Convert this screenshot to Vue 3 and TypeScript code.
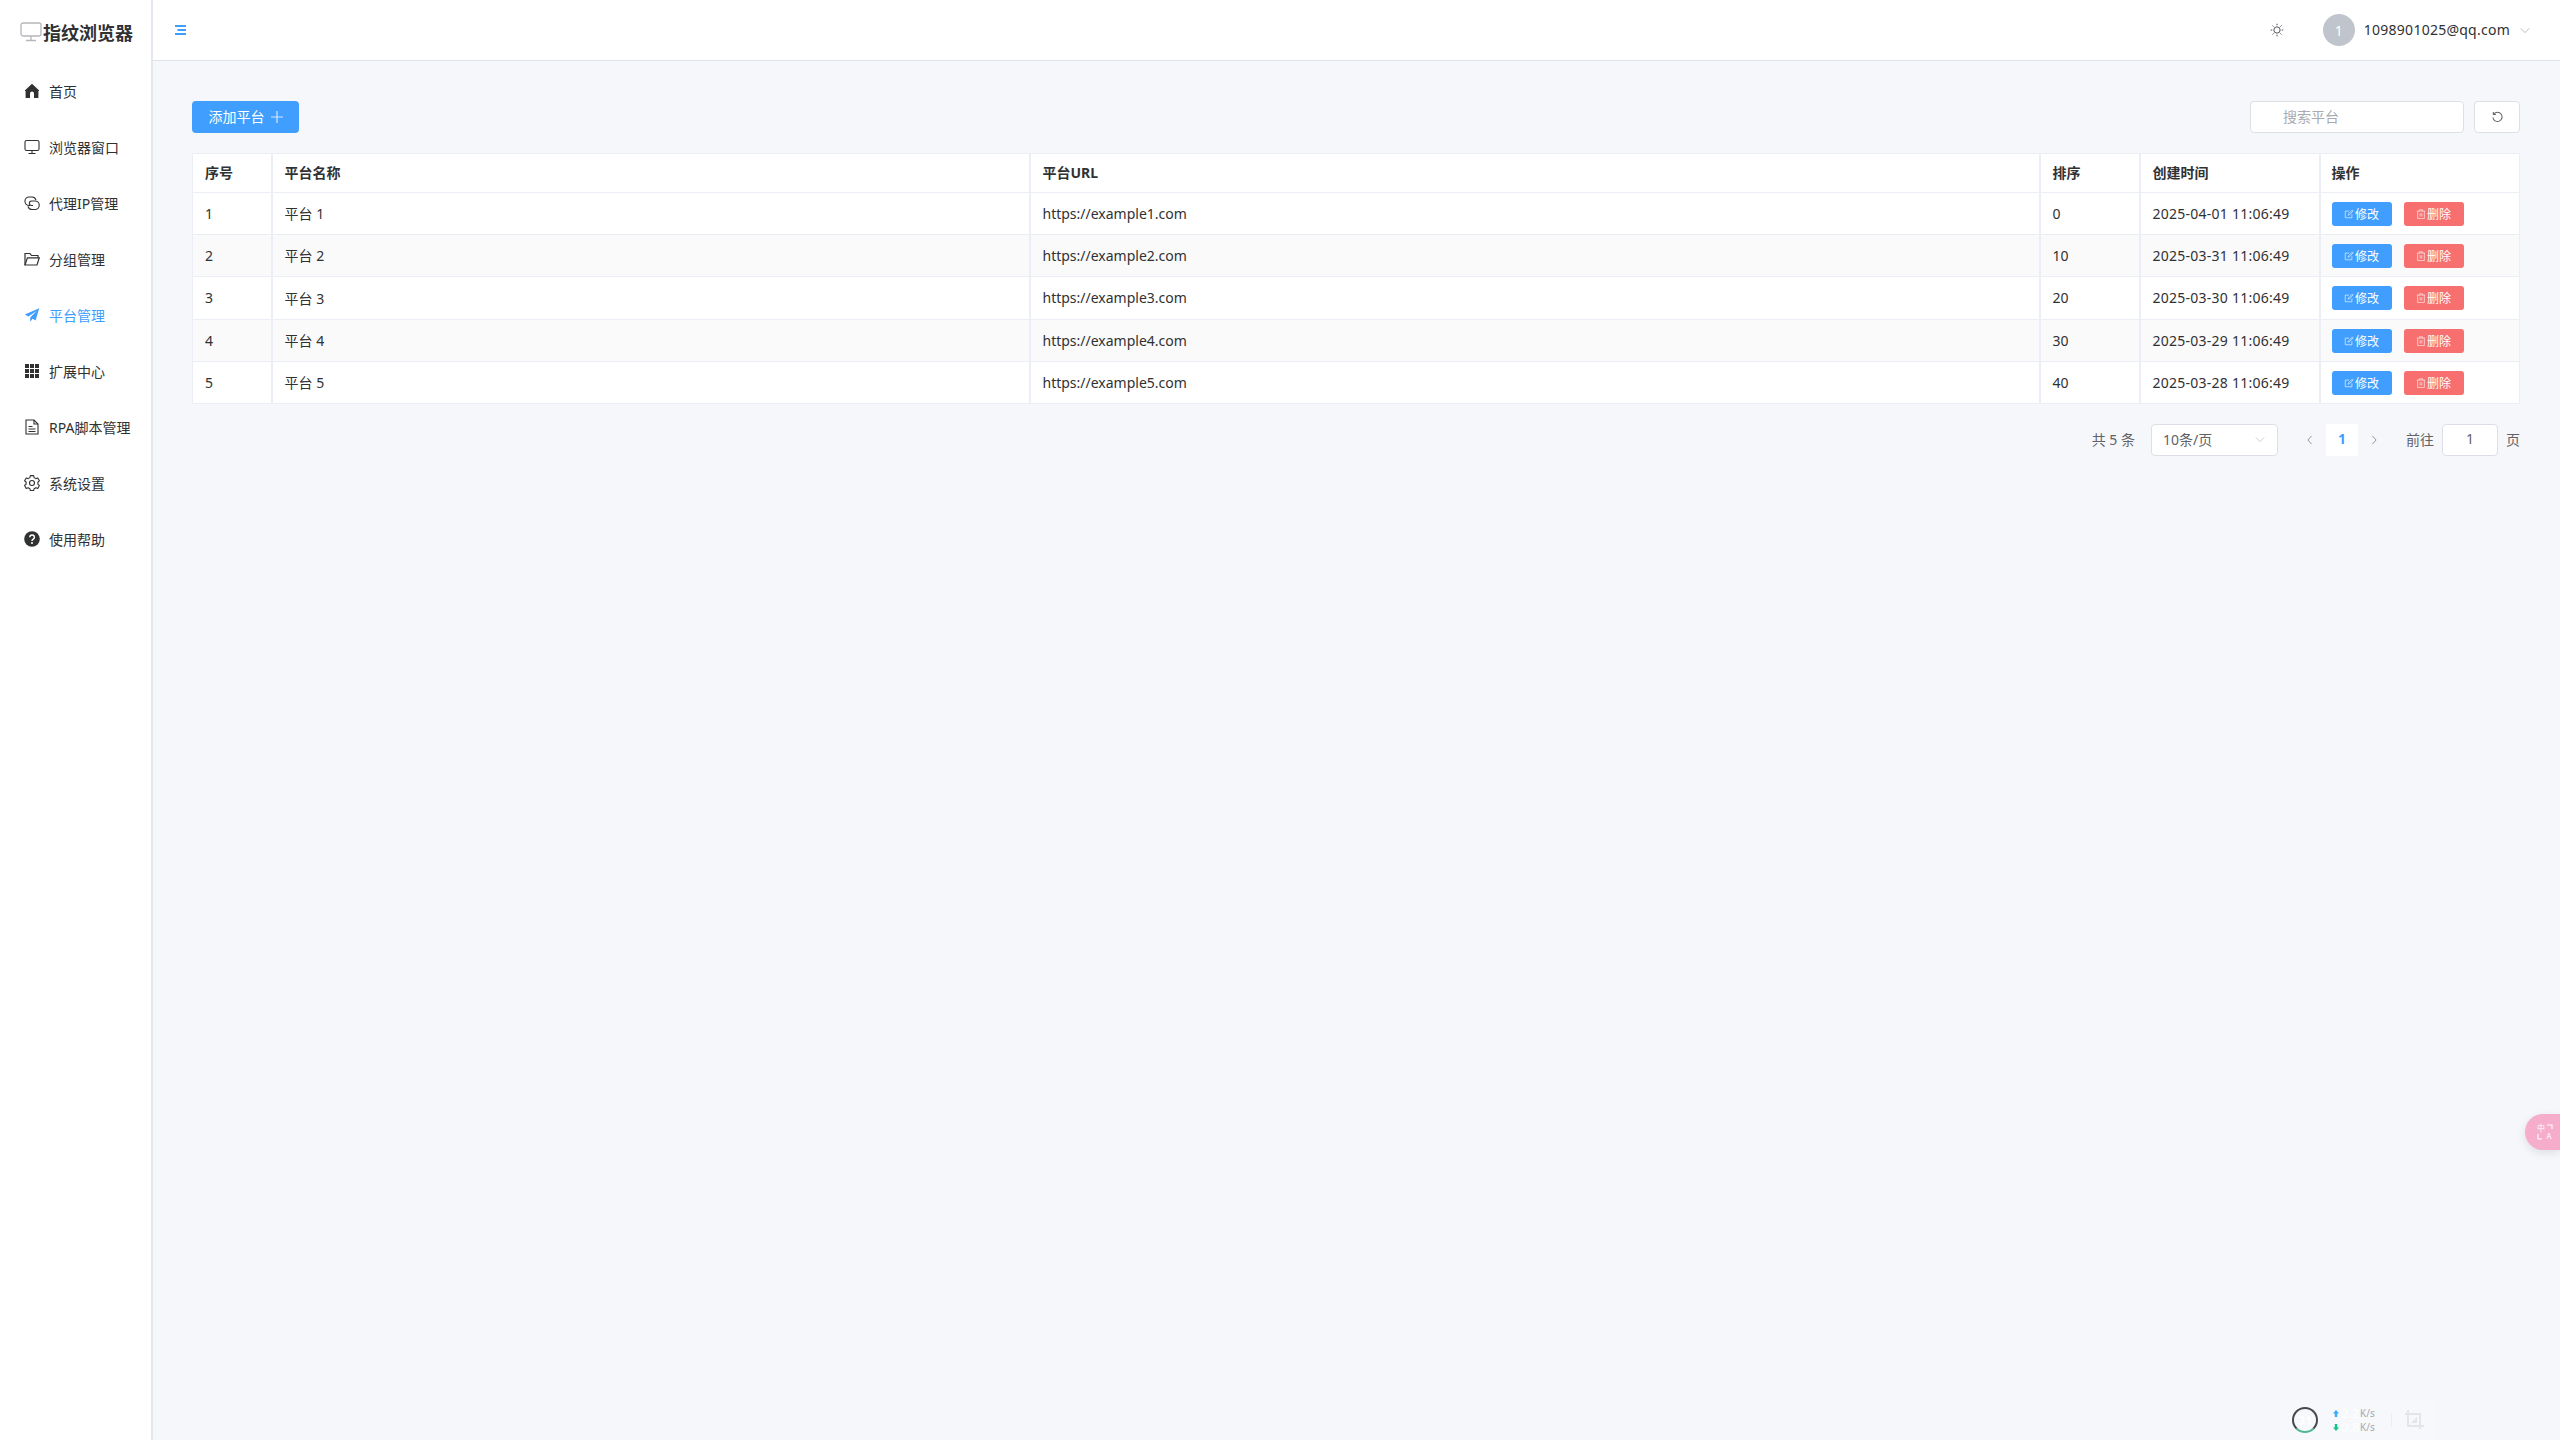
<script setup lang="ts">
const menu = [
  { key: 'home', label: '首页' },
  { key: 'monitor', label: '浏览器窗口' },
  { key: 'link', label: '代理IP管理' },
  { key: 'folder', label: '分组管理' },
  { key: 'plane', label: '平台管理', active: true },
  { key: 'grid', label: '扩展中心' },
  { key: 'doc', label: 'RPA脚本管理' },
  { key: 'gear', label: '系统设置' },
  { key: 'help', label: '使用帮助' },
]
const rows = [
  { id: 1, name: '平台 1', url: 'https://example1.com', sort: 0, time: '2025-04-01 11:06:49' },
  { id: 2, name: '平台 2', url: 'https://example2.com', sort: 10, time: '2025-03-31 11:06:49' },
  { id: 3, name: '平台 3', url: 'https://example3.com', sort: 20, time: '2025-03-30 11:06:49' },
  { id: 4, name: '平台 4', url: 'https://example4.com', sort: 30, time: '2025-03-29 11:06:49' },
  { id: 5, name: '平台 5', url: 'https://example5.com', sort: 40, time: '2025-03-28 11:06:49' },
]
</script>

<template>
  <div class="app">
    <aside class="side">
      <div class="logo">
        <svg class="logo-ic" viewBox="0 0 22 20" fill="none" stroke="#b4b6ba" stroke-width="1.3">
          <rect x="1" y="1" width="20" height="13" rx="2" />
          <path d="M11 14v4M6 18.500h10" />
        </svg>
        <span>指纹浏览器</span>
      </div>
      <nav class="menu">
        <div v-for="m in menu" :key="m.key" class="item" :class="{ active: m.active }">
          <svg class="ic" viewBox="0 0 16 16">
            <path v-if="m.key === 'home'" fill="currentColor" d="M8 .8.800 7.400l.8.800V15H6v-4.500a2 2 0 0 1 4 0V15h4.400V8.200l.8-.8z" />
            <g v-else-if="m.key === 'monitor'" fill="none" stroke="currentColor" stroke-width="1.100">
              <rect x="1" y="1.500" width="14" height="10" rx="1.600" />
              <path d="M8 11.500v3M4.500 14.500h7" />
            </g>
            <g v-else-if="m.key === 'link'" fill="none" stroke="currentColor" stroke-width="1.100">
              <path d="M6 10.500h-.8A4.200 4.200 0 0 1 5.200 2H8a4.200 4.200 0 0 1 4 3" />
              <path d="M10 6h1a4.200 4.200 0 0 1 0 8.500H8a4.200 4.200 0 0 1-4-3" />
              <path d="M10 6H7.600a2.200 2.200 0 0 0 0 4.500H9" />
            </g>
            <g v-else-if="m.key === 'folder'" fill="none" stroke="currentColor" stroke-width="1.200">
              <path d="M1 14V2.500h5l1.500 2H14v2.300" />
              <path d="M1 14l2.400-7.200H15.300L13 14z" />
            </g>
            <path v-else-if="m.key === 'plane'" fill="currentColor" d="M15.200 1.200.8 7.600l3.600 1.800L12.600 4 6.200 10.400v4.400l2.400-3 3 1.600z" />
            <g v-else-if="m.key === 'grid'" fill="currentColor">
              <rect x="1" y="1" width="4" height="4" /><rect x="6" y="1" width="4" height="4" /><rect x="11" y="1" width="4" height="4" />
              <rect x="1" y="6" width="4" height="4" /><rect x="6" y="6" width="4" height="4" /><rect x="11" y="6" width="4" height="4" />
              <rect x="1" y="11" width="4" height="4" /><rect x="6" y="11" width="4" height="4" /><rect x="11" y="11" width="4" height="4" />
            </g>
            <g v-else-if="m.key === 'doc'" fill="none" stroke="currentColor" stroke-width="1.100">
              <path d="M2 1h8l4 4v10H2z" />
              <path d="M10 1v4h4M4.500 7.500h4M4.500 10h7M4.500 12.500h7" />
            </g>
            <g v-else-if="m.key === 'gear'" fill="none" stroke="currentColor" stroke-width="1.100" stroke-linejoin="round">
              <path d="M6.400.600h3.200l.5 2 1.700 1 2-.6 1.600 2.800-1.500 1.400v2l1.500 1.400-1.600 2.800-2-.6-1.700 1-.5 1.800H6.400l-.5-1.800-1.700-1-2 .6L.6 10.400l1.500-1.400V7L.6 5.800l1.600-2.800 2 .6 1.700-1z" />
              <circle cx="8" cy="8" r="2.500" />
            </g>
            <g v-else>
              <circle cx="8" cy="8" r="7.800" fill="currentColor" />
              <path d="M5.800 6.200a2.300 2.300 0 1 1 3.500 2C8.500 8.700 8 9 8 10" fill="none" stroke="#fff" stroke-width="1.500" />
              <circle cx="8" cy="12" r="1" fill="#fff" />
            </g>
          </svg>
          <span>{{ m.label }}</span>
        </div>
      </nav>
    </aside>

    <div class="main">
      <header class="top">
        <svg class="burger" viewBox="0 0 11 10" fill="#409eff">
          <rect x="0" y="0" width="11" height="2" />
          <rect x="2.500" y="4" width="8.500" height="2" />
          <rect x="0" y="8" width="11" height="2" />
        </svg>
        <div class="top-right">
          <svg class="sun" viewBox="0 0 16 16" fill="none" stroke="#3a3d42" stroke-width="1">
            <circle cx="8" cy="8" r="3.600" />
            <path d="M8 .8v1.800M8 13.400v1.800M.8 8h1.800M13.400 8h1.800M2.900 2.900l1.200 1.200M11.900 11.900l1.200 1.200M2.900 13.100l1.200-1.200M11.900 4.100l1.200-1.200" />
          </svg>
          <div class="avatar">1</div>
          <span class="email">1098901025@qq.com</span>
          <svg class="chev" viewBox="0 0 12 8" fill="none" stroke="#a8abb2" stroke-width="1"><path d="M1 1.500l5 5 5-5" /></svg>
        </div>
      </header>

      <main class="content">
        <div class="toolbar">
          <button class="add">
            <span class="add-label">添加平台</span>
            <svg class="plus" viewBox="0 0 12 12" stroke="#fff" stroke-width="1.200" opacity=".75"><path d="M6 0v12M0 6h12" /></svg>
          </button>
          <div class="tools">
            <div class="search">搜索平台</div>
            <button class="refresh">
              <svg viewBox="0 0 14 14" fill="none" stroke="#606266" stroke-width="1.100">
                <path d="M3 3.200A5 5 0 1 1 2 7" />
                <path d="M2.500 1v2.700h2.700" />
              </svg>
            </button>
          </div>
        </div>

        <table class="tbl">
          <colgroup>
            <col class="c1" /><col class="c2" /><col class="c3" /><col class="c4" /><col class="c5" /><col />
          </colgroup>
          <thead>
            <tr><th>序号</th><th>平台名称</th><th>平台URL</th><th>排序</th><th>创建时间</th><th>操作</th></tr>
          </thead>
          <tbody>
            <tr v-for="r in rows" :key="r.id">
              <td>{{ r.id }}</td>
              <td>{{ r.name }}</td>
              <td>{{ r.url }}</td>
              <td>{{ r.sort }}</td>
              <td class="time">{{ r.time }}</td>
              <td>
                <div class="ops">
                  <button class="op edit">
                    <svg viewBox="0 0 12 12" fill="none" stroke="currentColor" stroke-width="1"><path d="M9.500 6.500v4h-8v-8h4.500M5 7.500l.4-1.800L10 1.200l1 1L6.500 7z" /></svg>修改
                  </button>
                  <button class="op del">
                    <svg viewBox="0 0 12 12" fill="none" stroke="currentColor" stroke-width="1"><path d="M1 2.500h10M4 2.500V1h4v1.500M2 2.500v9h8v-9M5 5v4M7 5v4" /></svg>删除
                  </button>
                </div>
              </td>
            </tr>
          </tbody>
        </table>

        <div class="pager">
          <span class="total">共 5 条</span>
          <div class="size">
            <span>10条/页</span>
            <svg viewBox="0 0 12 8" fill="none" stroke="#c0c4cc" stroke-width="1"><path d="M1 1.500l5 5 5-5" /></svg>
          </div>
          <svg class="arrow" viewBox="0 0 8 12" fill="none" stroke="#7f8389" stroke-width="1"><path d="M6 1 1.500 6 6 11" /></svg>
          <div class="page">1</div>
          <svg class="arrow" viewBox="0 0 8 12" fill="none" stroke="#7f8389" stroke-width="1"><path d="M2 1l4.500 5L2 11" /></svg>
          <span class="goto">前往</span>
          <div class="jump">1</div>
          <span class="unit">页</span>
        </div>
      </main>
    </div>

    <div class="trans">
      <div class="trans-grid">
        <span>中</span>
        <svg viewBox="0 0 8 8" fill="none" stroke="#fff" stroke-width="1.100"><path d="M2 1h5v4" /></svg>
        <svg viewBox="0 0 8 8" fill="none" stroke="#fff" stroke-width="1.100"><path d="M1 2v5h4" /></svg>
        <span>A</span>
      </div>
    </div>

    <div class="net">
      <div class="ring"><span>31</span></div>
      <div class="speeds">
        <div class="sp">
          <svg viewBox="0 0 6 7" fill="#35aaff"><path d="M3 0l3 3.500H4.200V7H1.800V3.500H0z" /></svg>
          <b>2.2</b><small>K/s</small>
        </div>
        <div class="sp">
          <svg viewBox="0 0 6 7" fill="#10c583"><path d="M3 7 0 3.500h1.800V0h2.400v3.500H6z" /></svg>
          <b>0.8</b><small>K/s</small>
        </div>
      </div>
      <span class="sep"></span>
      <svg class="crop" viewBox="0 0 20 20" fill="none" stroke="#e4e5e8" stroke-width="2">
        <path d="M1 4h15v15M4 0v16h16" />
        <path d="M7 13l6-6v6z" fill="#e4e5e8" stroke="none" />
      </svg>
    </div>
  </div>
</template>

<style>
html, body { margin: 0; padding: 0; background: #f5f7fb; }
</style>

<style scoped>
.app {
  position: relative;
  display: flex;
  width: 2560px;
  height: 1440px;
  overflow: hidden;
  background: #f5f7fb;
  color: #303133;
  font-family: "Noto Sans", "Noto Sans CJK SC", sans-serif;
  font-size: 14px;
}
.side {
  width: 151px;
  flex: none;
  background: #fff;
  border-right: 2px solid #e4e7ed;
}
.logo {
  height: 63px;
  display: flex;
  align-items: center;
  padding-left: 20px;
  font-size: 18px;
  font-weight: 700;
  color: #303133;
}
.logo span { margin-left: 1px; }
.logo-ic { width: 22px; height: 20px; flex: none; }
.menu { display: flex; flex-direction: column; }
.item {
  height: 56px;
  display: flex;
  align-items: center;
  padding-left: 24px;
  gap: 9px;
  color: #303133;
}
.item.active { color: #409eff; }
.ic { width: 16px; height: 16px; flex: none; }
.main { flex: 1; min-width: 0; display: flex; flex-direction: column; }
.top {
  height: 60px;
  flex: none;
  background: #fff;
  border-bottom: 1px solid #dfe2ea;
  display: flex;
  align-items: center;
  justify-content: space-between;
  padding: 0 30px 0 22px;
}
.burger { width: 11px; height: 10px; }
.top-right { display: flex; align-items: center; }
.sun { width: 14px; height: 14px; margin-right: 39px; }
.avatar {
  width: 32px;
  height: 32px;
  border-radius: 50%;
  background: #c0c4cc;
  color: #fff;
  display: flex;
  align-items: center;
  justify-content: center;
  margin-right: 9px;
}
.email { font-size: 14px; letter-spacing: .25px; color: #303133; margin-bottom: 1px; }
.chev { width: 10px; height: 7px; margin-left: 10px; }
.content { flex: 1; padding: 40px 40px 0 39px; }
.toolbar {
  display: flex;
  justify-content: space-between;
  align-items: center;
  margin-bottom: 20px;
}
.add {
  width: 107px;
  height: 32px;
  border: 0;
  border-radius: 4px;
  background: #409eff;
  color: #fff;
  font: inherit;
  padding: 0 0 2px;
  display: flex;
  align-items: center;
  justify-content: center;
  gap: 6px;
}
.plus { width: 12px; height: 12px; margin-top: 2px; }
.tools { display: flex; gap: 10px; }
.search {
  width: 214px;
  height: 32px;
  box-sizing: border-box;
  border: 1px solid #dcdfe6;
  border-radius: 4px;
  background: #fff;
  color: #a8abb2;
  padding-left: 32px;
  line-height: 30px;
}
.refresh {
  width: 46px;
  height: 32px;
  border: 1px solid #dcdfe6;
  border-radius: 4px;
  background: #fff;
  padding: 0;
  display: flex;
  align-items: center;
  justify-content: center;
}
.refresh svg { width: 13px; height: 13px; }
.tbl {
  width: 100%;
  table-layout: fixed;
  border-collapse: collapse;
  background: #fff;
  border: 1px solid #ebeef5;
  color: #303133;
}
.c1 { width: 79px; }
.c2 { width: 758px; }
.c3 { width: 1010px; }
.c4 { width: 100px; }
.c5 { width: 180px; }
th, td {
  border: 1px solid #ebeef5;
  border-width: 1px 2px 1px 0;
  padding: 0 12px;
  text-align: left;
  font-size: 14px;
}
th:last-child, td:last-child { border-right: 0; padding-left: 11px; }
th { height: 36px; font-weight: 700; padding-bottom: 2px; }
td { height: 41px; }
td:not(:last-child) { height: 40px; padding-bottom: 1px; }
tbody tr:nth-child(3) td { height: 42px; }
tbody tr:nth-child(3) td:not(:last-child) { height: 41px; }
.time { letter-spacing: .25px; }
tbody tr:nth-child(even) td { background: #fafafa; }
.ops { display: flex; gap: 12px; }
.op {
  width: 60px;
  height: 24px;
  border: 0;
  border-radius: 3px;
  color: #fff;
  font: inherit;
  font-size: 12px;
  padding: 0;
  display: flex;
  align-items: center;
  justify-content: center;
  gap: 1px;
}
.op svg { width: 10px; height: 10px; opacity: .75; }
.edit { background: #409eff; }
.del { background: #f76f6f; }
.pager {
  display: flex;
  align-items: center;
  justify-content: flex-end;
  height: 32px;
  margin-top: 20px;
  color: #606266;
}
.total { margin-right: 16px; margin-bottom: 2px; }
.size {
  width: 127px;
  height: 32px;
  box-sizing: border-box;
  border: 1px solid #dcdfe6;
  border-radius: 4px;
  background: #fff;
  display: flex;
  align-items: center;
  justify-content: space-between;
  padding: 0 12px 2px 11px;
  margin-right: 28px;
}
.size svg { width: 10px; height: 7px; }
.arrow { width: 8px; height: 10px; }
.page {
  width: 32px;
  height: 32px;
  margin: 0 12px;
  background: #fff;
  color: #409eff;
  font-weight: 700;
  text-align: center;
  line-height: 30px;
}
.goto { margin-left: 28px; margin-right: 8px; margin-bottom: 2px; }
.jump {
  width: 56px;
  height: 32px;
  box-sizing: border-box;
  border: 1px solid #dcdfe6;
  border-radius: 4px;
  background: #fff;
  text-align: center;
  line-height: 28px;
  margin-right: 8px;
}
.unit { margin-bottom: 2px; }
.trans {
  position: absolute;
  right: 0;
  top: 1114px;
  width: 35px;
  height: 36px;
  border-radius: 18px 0 0 18px;
  background: #f5adcb;
  box-shadow: 0 3px 10px rgba(0, 0, 0, .1);
  display: flex;
  align-items: center;
  padding-left: 12px;
  box-sizing: border-box;
}
.trans-grid {
  display: grid;
  grid-template-columns: 8px 8px;
  grid-template-rows: 8px 8px;
  color: #fff;
  font-size: 8px;
  line-height: 8px;
  font-family: "Noto Sans CJK SC", sans-serif;
  text-align: center;
}
.trans-grid svg { width: 8px; height: 8px; }
.net {
  position: absolute;
  left: 2279px;
  top: 1400px;
  width: 156px;
  height: 40px;
  display: flex;
  align-items: center;
  background: #f6f8fb;
}
.ring {
  width: 26px;
  height: 26px;
  box-sizing: border-box;
  border-radius: 50%;
  border: 2.500px solid #45484d;
  border-bottom-color: #4fb78f;
  margin-left: 13px;
  color: #fff;
  font-size: 12px;
  font-weight: 700;
  display: flex;
  align-items: center;
  justify-content: center;
}
.speeds { margin-left: 15px; display: flex; flex-direction: column; gap: 2px; }
.sp { display: flex; align-items: center; height: 12px; }
.sp svg { width: 6px; height: 7px; margin-right: 2px; flex: none; }
.sp b { color: #fff; font-size: 13px; font-weight: 400; width: 19px; }
.sp small { font-size: 10px; color: #a6a8ac; }
.sep { width: 1px; height: 14px; margin-left: 16px; background: #dcf3fa; }
.crop { width: 20px; height: 20px; margin-left: 12px; }
</style>
